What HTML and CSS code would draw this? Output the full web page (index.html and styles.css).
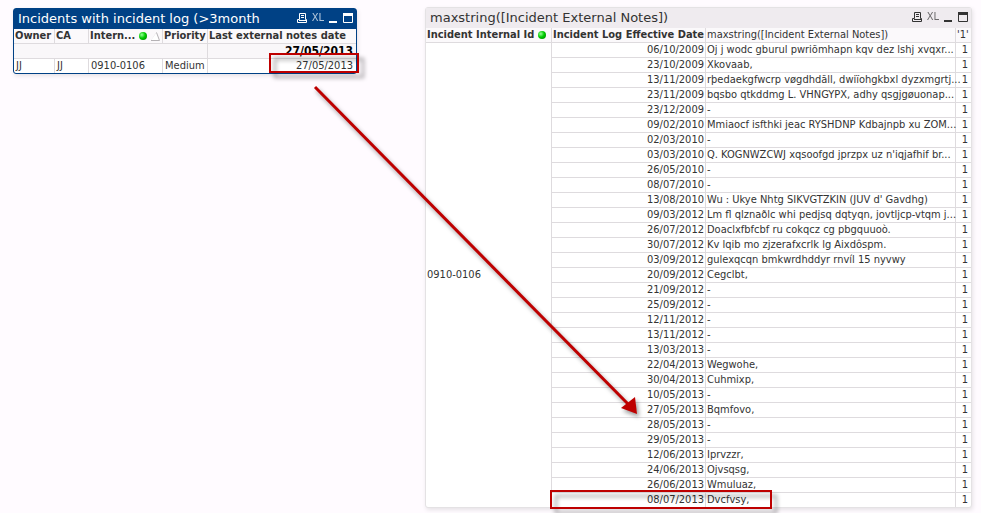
FILE: index.html
```html
<!DOCTYPE html>
<html lang="en">
<head>
    <meta charset="UTF-8">
    <meta name="viewport" content="width=device-width, initial-scale=1.0">
    <title>Incidents</title>
    <link rel="stylesheet" href="styles.css">
</head>
<body>
    <main class="sheet">
        <section class="panel incidents">
            <header class="caption">
                <h2>Incidents with incident log (&gt;3month</h2>
                <div class="tools">
                    <button aria-label="Print"><svg width="11" height="11" viewBox="0 0 11 11"><path d="M2.5 6.5V.5h6v6M4 2.5h3M4 4.5h3M2.5 6.5h-2v3h9v-3h-1M2 7.5h7" /></svg></button>
                    <button class="xl">XL</button>
                    <button aria-label="Minimize"><svg width="11" height="11" viewBox="0 0 11 11"><path class="solid" d="M1 8h8v2H1z" /></svg></button>
                    <button aria-label="Maximize"><svg width="11" height="11" viewBox="0 0 11 11"><path d="M.5.5h9v9h-9z" /><path class="solid" d="M0 0h10v3H0z" /></svg></button>
                </div>
            </header>
            <table>
                <colgroup>
                    <col class="owner"><col class="ca"><col class="intern"><col class="priority"><col>
                </colgroup>
                <thead>
                    <tr>
                        <th>Owner</th>
                        <th>CA</th>
                        <th><div class="sorted"><span>Intern...</span><i class="dot"></i><svg width="9" height="9" viewBox="0 0 9 9"><path class="slope" d="M.5 8.5L5.5.5" /><path d="M0 8.5h8.5L5.5.5" /></svg></div></th>
                        <th>Priority</th>
                        <th>Last external notes date</th>
                    </tr>
                </thead>
                <tbody>
                    <tr class="total"><td colspan="4"></td><td class="num">27/05/2013</td></tr>
                    <tr><td>JJ</td><td>JJ</td><td>0910-0106</td><td>Medium</td><td class="num">27/05/2013</td></tr>
                </tbody>
            </table>
            <div class="mark mark-date"></div>
        </section>

        <section class="panel notes">
            <header class="caption">
                <h2>maxstring([Incident External Notes])</h2>
                <div class="tools">
                    <button aria-label="Print"><svg width="11" height="11" viewBox="0 0 11 11"><path d="M2.5 6.5V.5h6v6M4 2.5h3M4 4.5h3M2.5 6.5h-2v3h9v-3h-1M2 7.5h7" /></svg></button>
                    <button class="xl">XL</button>
                    <button aria-label="Minimize"><svg width="11" height="11" viewBox="0 0 11 11"><path class="solid" d="M1 8h8v2H1z" /></svg></button>
                    <button aria-label="Maximize"><svg width="11" height="11" viewBox="0 0 11 11"><path d="M.5.5h9v9h-9z" /><path class="solid" d="M0 0h10v3H0z" /></svg></button>
                </div>
            </header>
            <table>
                <colgroup>
                    <col class="incident"><col class="date"><col><col class="one">
                </colgroup>
                <thead>
                    <tr>
                        <th><div class="sorted"><span>Incident Internal Id</span><i class="dot"></i></div></th>
                        <th>Incident Log Effective Date</th>
                        <th class="plain">maxstring([Incident External Notes])</th>
                        <th class="plain">'1'</th>
                    </tr>
                </thead>
                <tbody>
                    <tr><td rowspan="31">0910-0106</td><td class="num">06/10/2009</td><td>Oj j wodc gburul pwriõmhapn kqv dez lshj xvqxr...</td><td class="num">1</td></tr>
                    <tr><td class="num">23/10/2009</td><td>Xkovaab,</td><td class="num">1</td></tr>
                    <tr><td class="num">13/11/2009</td><td>rþedaekgfwcrp vøgdhdãll, dwiïohgkbxl dyzxmgrtj...</td><td class="num">1</td></tr>
                    <tr><td class="num">23/11/2009</td><td>bqsbo qtkddmg L. VHNGYPX, adhy qsgjgøuonap...</td><td class="num">1</td></tr>
                    <tr><td class="num">23/12/2009</td><td>-</td><td class="num">1</td></tr>
                    <tr><td class="num">09/02/2010</td><td>Mmiaocf isfthki jeac RYSHDNP Kdbajnpb xu ZOM...</td><td class="num">1</td></tr>
                    <tr><td class="num">02/03/2010</td><td>-</td><td class="num">1</td></tr>
                    <tr><td class="num">03/03/2010</td><td>Q. KOGNWZCWJ xqsoofgd jprzpx uz n'iqjafhif br...</td><td class="num">1</td></tr>
                    <tr><td class="num">26/05/2010</td><td>-</td><td class="num">1</td></tr>
                    <tr><td class="num">08/07/2010</td><td>-</td><td class="num">1</td></tr>
                    <tr><td class="num">13/08/2010</td><td>Wu : Ukye Nhtg SIKVGTZKIN (JUV d' Gavdhg)</td><td class="num">1</td></tr>
                    <tr><td class="num">09/03/2012</td><td>Lm fl qlznaðlc whi pedjsq dqtyqn, jovtljcp-vtqm j...</td><td class="num">1</td></tr>
                    <tr><td class="num">26/07/2012</td><td>Doaclxfbfcbf ru cokqcz cg pbgquuoò.</td><td class="num">1</td></tr>
                    <tr><td class="num">30/07/2012</td><td>Kv lqib mo zjzerafxcrlk lg Aixdôspm.</td><td class="num">1</td></tr>
                    <tr><td class="num">03/09/2012</td><td>gulexqcqn bmkwrdhddyr rnvíl 15 nyvwy</td><td class="num">1</td></tr>
                    <tr><td class="num">20/09/2012</td><td>Cegclbt,</td><td class="num">1</td></tr>
                    <tr><td class="num">21/09/2012</td><td>-</td><td class="num">1</td></tr>
                    <tr><td class="num">25/09/2012</td><td>-</td><td class="num">1</td></tr>
                    <tr><td class="num">12/11/2012</td><td>-</td><td class="num">1</td></tr>
                    <tr><td class="num">13/11/2012</td><td>-</td><td class="num">1</td></tr>
                    <tr><td class="num">13/03/2013</td><td>-</td><td class="num">1</td></tr>
                    <tr><td class="num">22/04/2013</td><td>Wegwohe,</td><td class="num">1</td></tr>
                    <tr><td class="num">30/04/2013</td><td>Cuhmixp,</td><td class="num">1</td></tr>
                    <tr><td class="num">10/05/2013</td><td>-</td><td class="num">1</td></tr>
                    <tr><td class="num">27/05/2013</td><td>Bqmfovo,</td><td class="num">1</td></tr>
                    <tr><td class="num">28/05/2013</td><td>-</td><td class="num">1</td></tr>
                    <tr><td class="num">29/05/2013</td><td>-</td><td class="num">1</td></tr>
                    <tr><td class="num">12/06/2013</td><td>Iprvzzr,</td><td class="num">1</td></tr>
                    <tr><td class="num">24/06/2013</td><td>Ojvsqsg,</td><td class="num">1</td></tr>
                    <tr><td class="num">26/06/2013</td><td>Wmuluaz,</td><td class="num">1</td></tr>
                    <tr><td class="num">08/07/2013</td><td>Dvcfvsy,</td><td class="num">1</td></tr>
                </tbody>
            </table>
            <div class="mark mark-row"></div>
        </section>

        <svg class="arrow" width="350" height="350" viewBox="0 0 350 350">
            <path class="shaft" d="M5 7L320 326" />
            <path class="head" d="M327 334L311 328L325 317z" />
        </svg>
    </main>
</body>
</html>
```
FILE: styles.css
```css
body{
    margin: 0;
    background: #fffbff;
    color: #333;
    font-family: "DejaVu Sans Condensed", "DejaVu Sans", sans-serif;
    font-size: 11px;
    overflow: hidden;
}
.sheet{
    position: relative;
    display: flex;
    align-items: flex-start;
    gap: 68px;
    padding: 7px 9px 5px 13px;
}
.panel{
    position: relative;
    border: 1px solid #e4e2e4;
    border-radius: 3px;
    background: white;
    box-shadow: 1px 2px 4px #e6e2e6;
}
.incidents{
    flex: 0 0 342px;
    margin-top: 1px;
    border-color: #004185;
}
.notes{
    flex: 1;
    min-width: 0;
}

/* caption bar */
.caption{
    display: flex;
    justify-content: space-between;
    align-items: center;
    box-sizing: border-box;
    height: 20px;
    padding: 0 2px 2px 4px;
    background: #efebef;
}
.incidents .caption{
    background: #004185;
    color: white;
}
.caption h2{
    margin: 0;
    font-family: "DejaVu Sans", sans-serif;
    font-size: 13px;
    font-weight: normal;
    white-space: nowrap;
}
.tools{
    display: flex;
    align-items: center;
    gap: 4px;
}
.tools button{
    display: block;
    padding: 0;
    border: 0;
    background: none;
    color: inherit;
    font-family: inherit;
}
.tools svg{
    display: block;
    fill: none;
    stroke: currentColor;
}
.tools .solid{
    fill: currentColor;
    stroke: none;
}
.tools .xl{
    font-size: 11px;
    line-height: 12px;
    opacity: 0.7;
}

/* tables */
table{
    width: 100%;
    table-layout: fixed;
    border-collapse: separate;
    border-spacing: 0;
}
th, td{
    height: 14px;
    padding: 0 0 0 1px;
    border-right: 1px solid #dedbde;
    border-bottom: 1px solid #dedbde;
    line-height: 14px;
    text-align: left;
    white-space: nowrap;
}
.incidents td{
    padding-left: 2px;
}
th{
    background: #fbf9fb;
}
th:last-child, td:last-child{
    border-right: 0;
}
tbody tr:last-child td, td[rowspan]{
    border-bottom: 0;
}
th.plain{
    font-weight: normal;
}
td.num{
    padding-right: 1px;
    text-align: right;
}
td.num:last-child{
    padding-right: 3px;
}
.total td{
    background: #f9f7f9;
    color: black;
    font-size: 12px;
    font-weight: bold;
}
.owner{ width: 41px; }
.ca{ width: 34px; }
.intern{ width: 74px; }
.priority{ width: 45px; }
.incident{ width: 126px; }
.date{ width: 154px; }
.one{ width: 15px; }

.sorted{
    display: flex;
    align-items: center;
    gap: 4px;
}
.sorted svg{
    flex: none;
    fill: white;
    stroke: #b5b2b5;
}
.sorted .slope{
    stroke: #e4e2e4;
}
.dot{
    flex: none;
    width: 8px;
    height: 8px;
    border-radius: 50%;
    background: radial-gradient(circle at 35% 35%, #9f9, #0c0 45%, #070);
}

/* red annotations */
.mark{
    position: absolute;
    box-sizing: border-box;
    border: 2px solid #be0000;
    filter: drop-shadow(5px 5px 2px rgba(0, 0, 0, 0.4));
}
.mark-date{
    right: -3px;
    bottom: 0;
    width: 90px;
    height: 20px;
}
.mark-row{
    left: 124px;
    bottom: -2px;
    width: 222px;
    height: 19px;
}
.arrow{
    position: absolute;
    left: 310px;
    top: 80px;
    filter: drop-shadow(2px 3px 2px rgba(0, 0, 0, 0.4));
    pointer-events: none;
}
.shaft{
    stroke: #be0000;
    stroke-width: 3;
}
.head{
    fill: #be0000;
}
```
